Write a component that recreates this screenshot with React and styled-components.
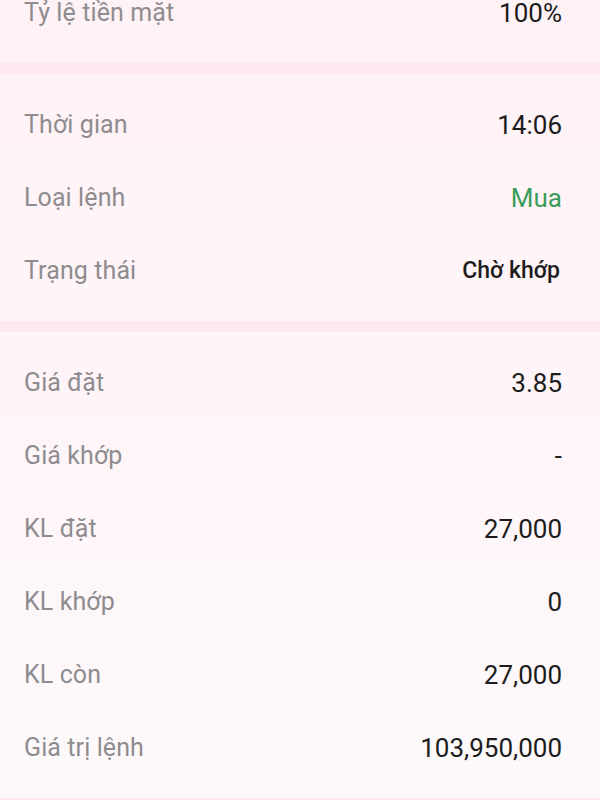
import styled, { createGlobalStyle } from 'styled-components';

const GlobalStyle = createGlobalStyle`
  html, body {
    margin: 0;
    padding: 0;
  }

  body {
    width: 600px;
    height: 800px;
    overflow: hidden;
    background: linear-gradient(180deg, #fff2f6 0%, #fff5f8 50%, #fdf9fa 100%);
    font-family: Roboto, 'Noto Sans', 'Liberation Sans', sans-serif;
  }
`;

const sections = [
  [{ label: 'Tỷ lệ tiền mặt', value: '100%' }],
  [
    { label: 'Thời gian', value: '14:06' },
    { label: 'Loại lệnh', value: 'Mua', tone: 'buy' },
    { label: 'Trạng thái', value: 'Chờ khớp', tone: 'status' },
  ],
  [
    { label: 'Giá đặt', value: '3.85' },
    { label: 'Giá khớp', value: '-' },
    { label: 'KL đặt', value: '27,000' },
    { label: 'KL khớp', value: '0' },
    { label: 'KL còn', value: '27,000' },
    { label: 'Giá trị lệnh', value: '103,950,000' },
  ],
];

function App() {
  return (
    <>
      <GlobalStyle />
      {/* the detail sheet is scrolled a little, first row is half hidden */}
      <Sheet>
        {sections.map((rows, i) => (
          <div key={i}>
            <Section>
              {rows.map((row) => (
                <Row key={row.label}>
                  <Label>{row.label}</Label>
                  <Value $tone={row.tone}>{row.value}</Value>
                </Row>
              ))}
            </Section>
            <Divider />
          </div>
        ))}
      </Sheet>
    </>
  );
}

export default App;

const Sheet = styled.main`
  display: flex;
  flex-direction: column;
  margin-top: -38px;
`;

const Section = styled.section`
  display: flex;
  flex-direction: column;
  padding: 14px 38px 14px 24px;
`;

const Row = styled.div`
  display: flex;
  align-items: center;
  justify-content: space-between;
  height: 73px;
`;

const Label = styled.span`
  font-size: 25px;
  color: #8e8c8f;
  letter-spacing: 0.1px;
`;

const toneColor = {
  buy: '#3a9d5b',
  status: '#1e1e1e',
};

const Value = styled.span`
  font-size: ${(p) => (p.$tone === 'status' ? '23px' : '26px')};
  font-weight: ${(p) => (p.$tone === 'status' ? 500 : 400)};
  color: ${(p) => toneColor[p.$tone] || '#1c1c1c'};
  margin-right: ${(p) => (p.$tone === 'status' ? '2px' : '0')};
`;

const Divider = styled.div`
  height: 11px;
  background: #ffe9ef;
`;
